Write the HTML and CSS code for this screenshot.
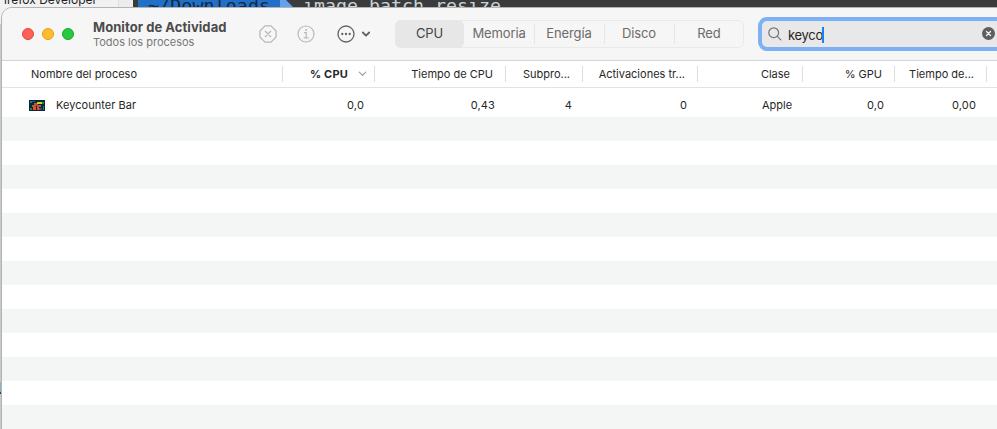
FILE: index.html
```
<!DOCTYPE html>
<html lang="es">
<head>
<meta charset="utf-8">
<title>Monitor de Actividad</title>
<link rel="stylesheet" href="styles.css">
</head>
<body>
<div class="desktop">
  <div class="sidebar-app"><span>irefox Developer</span></div>
  <div class="terminal"><span class="path">~/Downloads</span><svg class="arrow" width="14" height="12" viewBox="0 0 14 12"><path d="M0 0H6L14 8V12H0Z" fill="#62a0f2"/></svg><span class="command">image batch resize</span></div>
  <span class="edge-letter">l</span>
</div>
<main class="window">
  <header class="toolbar">
    <div class="lights"><i class="close"></i><i class="minimize"></i><i class="maximize"></i></div>
    <div class="title"><h1>Monitor de Actividad</h1><p>Todos los procesos</p></div>
    <div class="actions">
      <svg width="18" height="18" viewBox="0 0 18 18" fill="none" stroke="#b8b8b8" stroke-width="1.25" stroke-linecap="round" stroke-linejoin="round"><path d="M6 .9H12L17.1 6V12L12 17.1H6L.9 12V6Z"/><path d="M6.3 6.3L11.7 11.7M11.7 6.3L6.3 11.7"/></svg>
      <svg width="18" height="18" viewBox="0 0 18 18" fill="none" stroke="#b8b8b8" stroke-width="1.2" stroke-linecap="round"><circle cx="9" cy="9" r="8"/><path d="M7.4 7.6H9.2V12.8M7.2 12.9H11.2"/><circle cx="9" cy="5" r=".6" fill="#b8b8b8" stroke-width=".8"/></svg>
      <svg class="more" width="34" height="18" viewBox="0 0 34 18" fill="none" stroke="#626262" stroke-width="1.3" stroke-linecap="round" stroke-linejoin="round"><circle cx="9" cy="9" r="8"/><g fill="#626262" stroke="none"><circle cx="5.3" cy="9" r="1.15"/><circle cx="9" cy="9" r="1.15"/><circle cx="12.7" cy="9" r="1.15"/></g><path d="M25.8 7.5L29 10.7L32.2 7.5" stroke-width="1.8"/></svg>
    </div>
    <nav class="tabs"><span class="active">CPU</span><span>Memoria</span><span>Energía</span><span>Disco</span><span>Red</span></nav>
    <div class="search">
      <svg width="14" height="14" viewBox="0 0 14 14" fill="none" stroke="#747474" stroke-width="1.2" stroke-linecap="round"><circle cx="5.7" cy="5.7" r="4.9"/><path d="M9.3 9.3L12.8 12.8"/></svg>
      <span class="query">keyco</span><i class="caret"></i>
      <svg class="clear" width="13" height="13" viewBox="0 0 13 13"><circle cx="6.5" cy="6.5" r="6.5" fill="#5e5e5e"/><path d="M4.5 4.5L8.5 8.5M8.5 4.5L4.5 8.5" stroke="#f2f2f2" stroke-width="1.3" stroke-linecap="round"/></svg>
    </div>
  </header>
  <div class="row head">
    <span class="name">Nombre del proceso</span>
    <span class="sorted">% CPU<svg width="9" height="6" viewBox="0 0 9 6" fill="none" stroke="#a0a0a0" stroke-width="1.2" stroke-linecap="round" stroke-linejoin="round"><path d="M1.3 1.2L4.5 4.4L7.7 1.2"/></svg></span>
    <span class="time">Tiempo de CPU</span><span>Subpro...</span><span>Activaciones tr...</span><span>Clase</span><span>% GPU</span><span>Tiempo de...</span>
  </div>
  <div class="table">
    <div class="row process">
      <span class="name"><svg width="16" height="11" viewBox="0 0 16 11"><path fill="#0b2638" d="M0 0H16V11H0Z"/><path fill="#16825f" d="M1 1H3V3H1ZM13 2H15V4H13ZM1 8H3V10H1ZM14 6H15V10H14Z"/><path fill="#c6d62a" d="M8 2H13V4H8Z"/><path fill="#a5652a" d="M5 3H8V5H5ZM3 5H7V7H3ZM9 5H12V7H9Z"/><path fill="#e8502a" d="M4 7H7V10H4ZM8 6H10V10H8Z"/><path fill="#1f4fa0" d="M3 1H6V2H3ZM11 8H13V10H11Z"/><path fill="#d12d55" d="M10 8H11V10H10ZM7 4H9V6H7Z"/></svg>Keycounter Bar</span>
      <span>0,0</span><span>0,43</span><span>4</span><span>0</span><span class="kind">Apple</span><span>0,0</span><span>0,00</span>
    </div>
  </div>
</main>
</body>
</html>
```
FILE: styles.css
```
* { box-sizing: border-box; }
body { margin: 0; width: 997px; height: 429px; overflow: hidden; background: #c9c9c9; font-family: Inter, "Liberation Sans", sans-serif; }
svg { display: block; flex: none; }

.desktop { position: absolute; inset: 0; display: flex; }
.sidebar-app { width: 133px; height: 24px; background: linear-gradient(90deg, #f1f1f1 118px, #dedede 118px, #dedede 119px, #ececec 119px); font-size: 12px; line-height: 14px; color: #222; overflow: hidden; }
.sidebar-app span { display: block; margin: -7px 0 0 4px; }
.terminal { display: flex; align-items: flex-start; flex: 1; height: 30px; padding-left: 5px; background: #3a3b3d; font: 18.3px/22px "DejaVu Sans Mono", monospace; overflow: hidden; white-space: pre; }
.path { width: 142px; padding-left: 10px; height: 22px; margin-top: -5px; color: #15273d; background: #1f70c6; letter-spacing: .1px; }
.command { margin: -5px 0 0 9px; color: #c9d3d5; }
.edge-letter { position: absolute; left: -5px; top: 380px; font: 16px/18px "DejaVu Sans Mono", monospace; color: #222; }

.window { position: absolute; left: 1px; top: 7px; width: 1010px; height: 440px; background: #fff; border: 1px solid #b3b3b3; border-radius: 11px 0 0 0; overflow: hidden; }
.toolbar { display: flex; height: 53px; padding-left: 20px; background: #f6f6f6; border-bottom: 1px solid #d5d5d5; }
.lights { display: flex; flex: none; gap: 8px; padding-top: 20px; width: 71px; }
.lights i { width: 12px; height: 12px; border-radius: 50%; }
.close { background: #ff5f57; border: 1px solid #e2463f; }
.minimize { background: #febc2e; border: 1px solid #e1a116; }
.maximize { background: #28c840; border: 1px solid #12ac28; }
.title { flex: none; width: 166px; padding-top: 11px; white-space: nowrap; }
h1 { margin: 0; font-size: 13px; line-height: 17px; font-weight: 700; color: #4b4b4b; letter-spacing: .06px; }
.title p { margin: 0; font-size: 11px; line-height: 13px; color: #787878; }
.actions { display: flex; flex: none; gap: 20px; padding-top: 17px; width: 136px; }
.more { margin-left: 2px; }
.tabs { display: flex; flex: none; width: 349px; height: 28px; margin-top: 12px; border: 1px solid #e9e9e9; border-radius: 6px; font-size: 13px; line-height: 25px; letter-spacing: -.12px; color: #6b6b6b; }
.tabs span { position: relative; flex: none; width: 70px; text-align: center; }
.tabs span + span + span::before { content: ""; position: absolute; left: 0; top: 3px; height: 20px; border-left: 1px solid #e6e6e6; }
.tabs .active { width: 69px; margin: -1px 0 -1px -1px; line-height: 27px; border-radius: 6px; background: #e7e7e7; color: #454545; }
.search { display: flex; flex: none; width: 260px; height: 34px; margin: 9px 0 0 14px; border: 4px solid #7eb0f5; border-radius: 9px; padding: 6px 0 0 6px; background: #e8e8e8; font-size: 13px; }
.query { margin-left: 6px; line-height: 17px; color: #252525; letter-spacing: -.3px; }
.caret { width: 2px; height: 16px; margin-left: -1px; background: #1681f5; flex: none; }
.clear { margin-left: 158px; }

.row { display: grid; grid-template-columns: 281px 92px 131px 77px 115px 105px 92px 92px; font-size: 11px; color: #272727; white-space: nowrap; }
.row span { text-align: right; padding-right: 11px; }
.row .name { text-align: left; padding-left: 29px; }
.head { height: 27px; border-bottom: 1px solid #e2e2e2; line-height: 26px; }
.head span { position: relative; padding-right: 13px; }
.head span::after { content: ""; position: absolute; right: 0; top: 5px; height: 16px; border-right: 1px solid #dedede; }
.head .sorted { display: flex; justify-content: flex-end; align-items: center; gap: 10px; padding-right: 8px; font-weight: 700; letter-spacing: .2px; }
.table { padding-top: 5px; height: 400px; background: repeating-linear-gradient(#fff 0 24px, #f4f5f5 24px 48px) 0 5px no-repeat; }
.process { height: 24px; line-height: 24px; }
.process span { letter-spacing: .15px; }
.process .name { display: flex; align-items: center; gap: 11px; padding-left: 27px; letter-spacing: .03px; }
.process .kind { text-align: left; padding-left: 64px; letter-spacing: 0; }
```
